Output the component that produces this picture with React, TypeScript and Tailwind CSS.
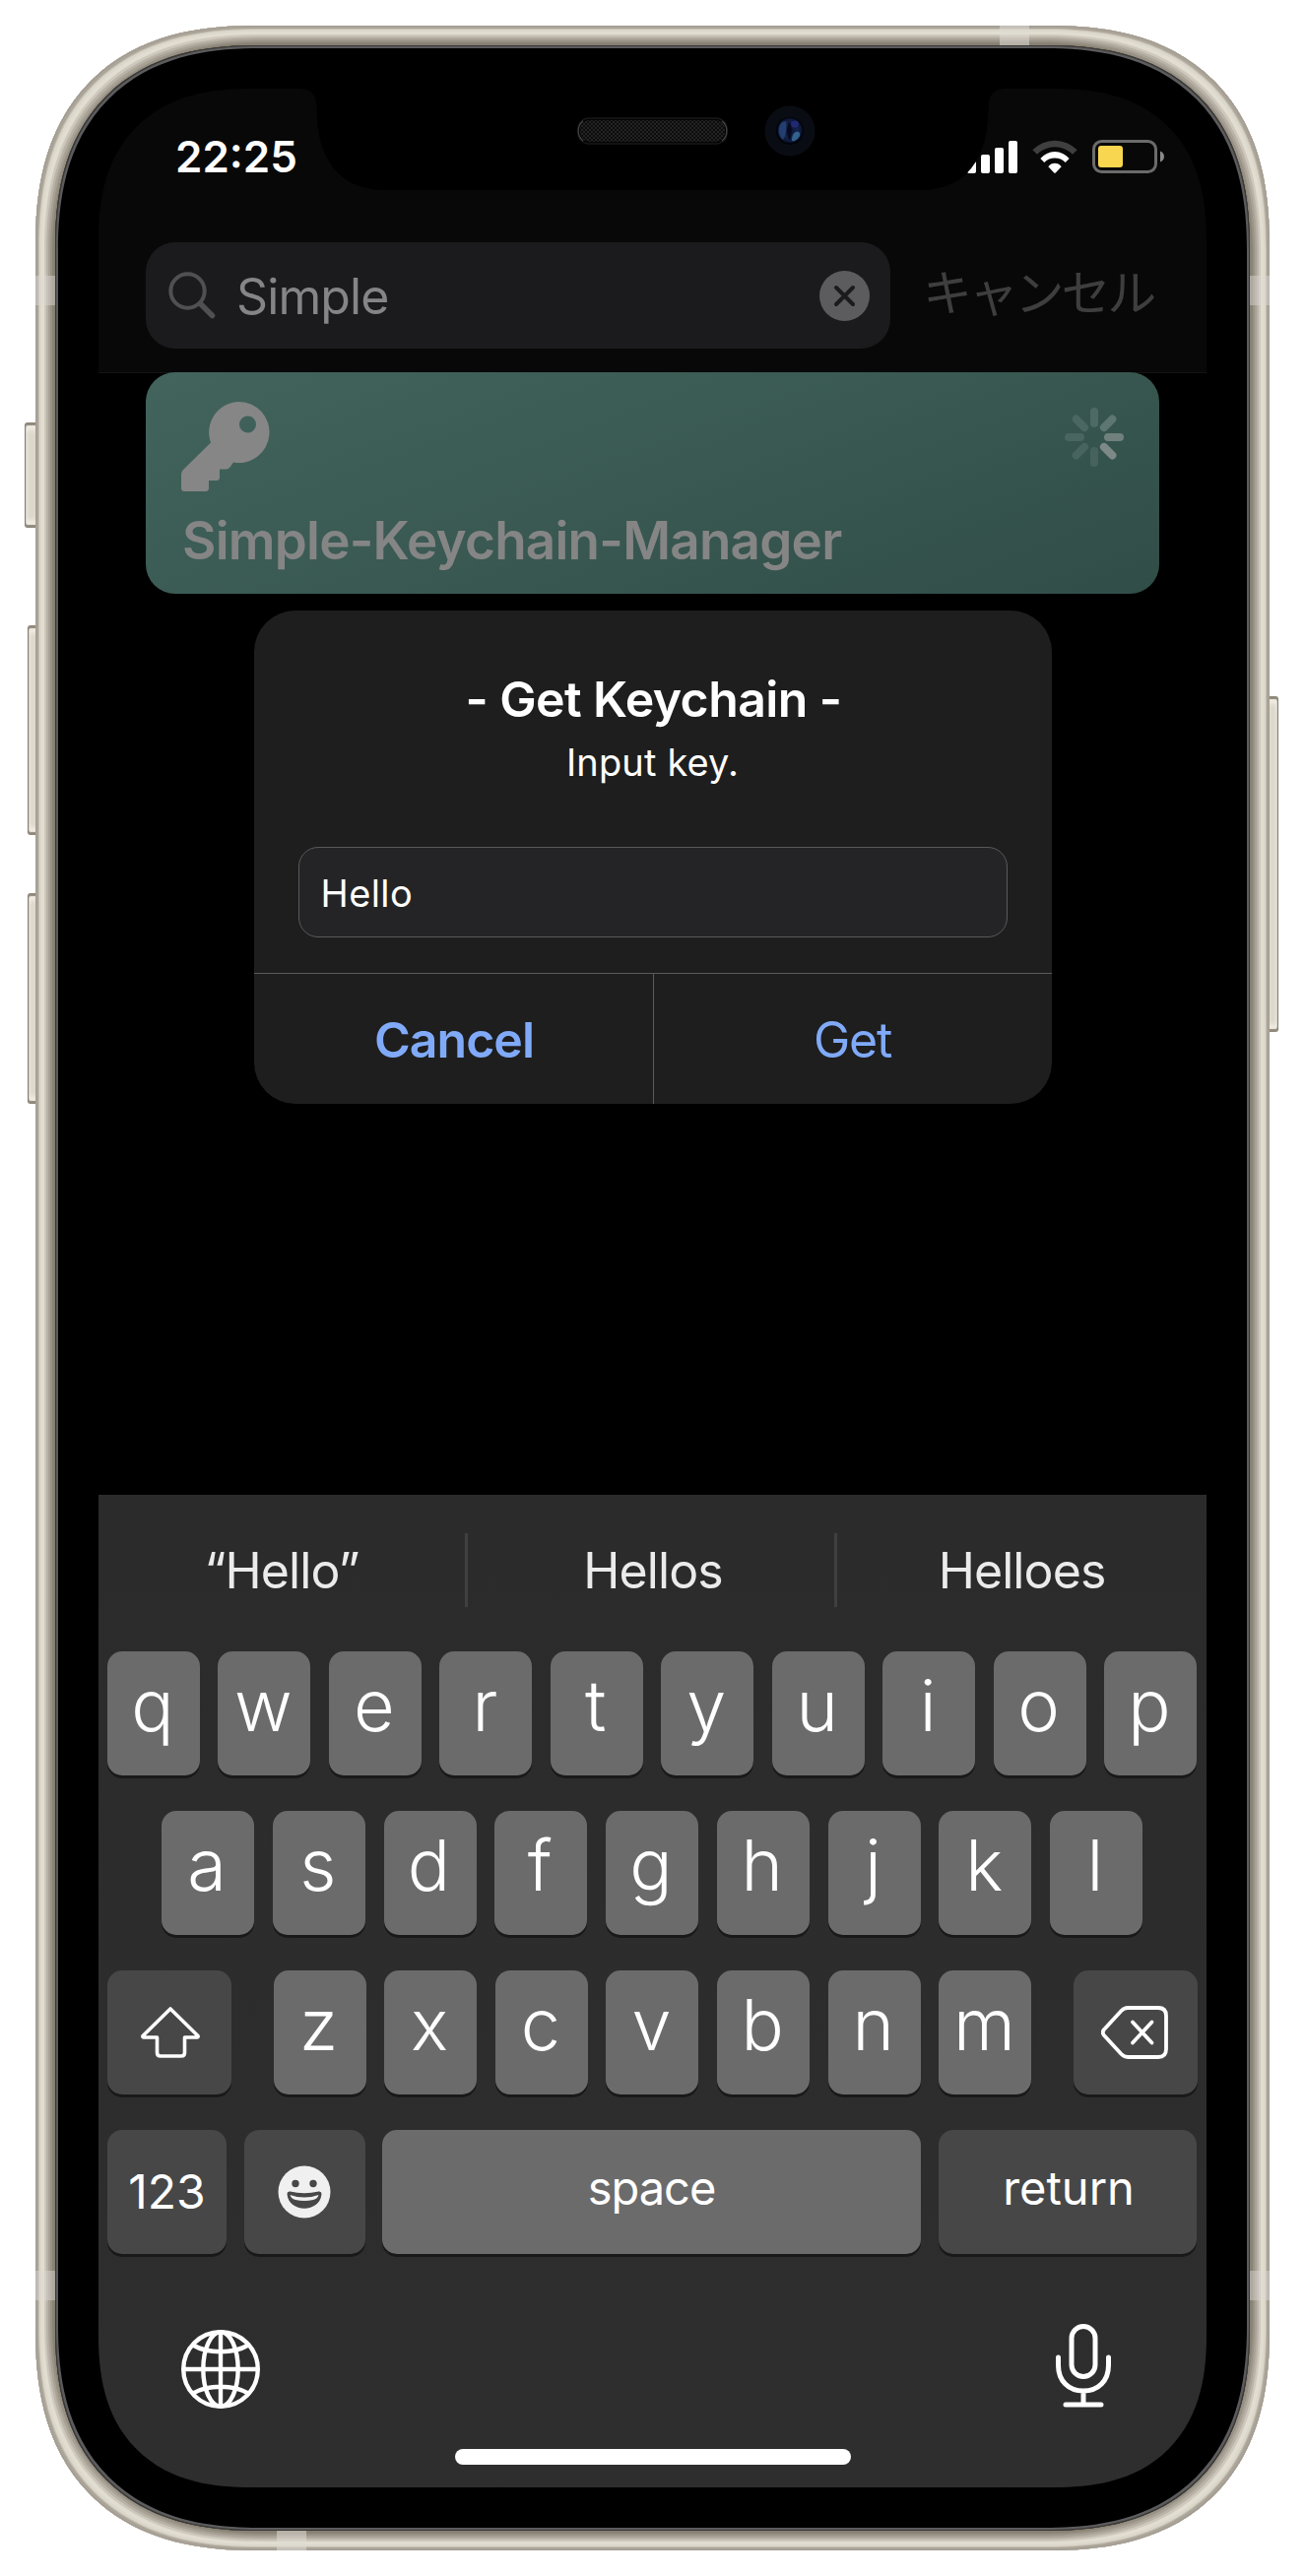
import type { ReactNode } from "react";

const FONT = "font-['Inter','Noto_Sans_CJK_JP',sans-serif]";

function SideButton({ className }: { className: string }) {
  return (
    <div
      className={`absolute bg-[#ddd8cc] shadow-[inset_0_3px_1px_#8f887b,inset_0_-3px_1px_#8f887b,inset_0_8px_4px_#efebe2,inset_0_-8px_4px_#efebe2] ${className}`}
    />
  );
}

function Speaker() {
  return (
    <svg className="absolute left-[486px] top-[29px]" width="153" height="28" viewBox="0 0 153 28">
      <defs>
        <pattern id="mesh" width="4" height="4" patternUnits="userSpaceOnUse">
          <rect width="4" height="4" fill="#0c0c0c" />
          <circle cx="1" cy="1" r="0.9" fill="#2e2e2e" />
          <circle cx="3" cy="3" r="0.9" fill="#2e2e2e" />
        </pattern>
      </defs>
      <rect x="1" y="1" width="151" height="26" rx="11" fill="#050505" stroke="#181818" strokeWidth="1.5" />
      <rect x="3" y="3" width="147" height="22" rx="9.5" fill="url(#mesh)" />
      <path d="M6 4C-0.5 9 -0.5 19 6 24M147 4C153.5 9 153.5 19 147 24" stroke="#444" strokeWidth="1.2" fill="none" />
    </svg>
  );
}

function Camera() {
  return (
    <svg className="absolute left-[676px] top-[17px]" width="52" height="52" viewBox="0 0 52 52">
      <defs>
        <radialGradient id="lens">
          <stop offset="0" stopColor="#0b1030" />
          <stop offset="0.6" stopColor="#14234f" />
          <stop offset="1" stopColor="#0a1430" />
        </radialGradient>
      </defs>
      <circle cx="26" cy="26" r="25.5" fill="#090d13" />
      <circle cx="26" cy="26" r="14" fill="#02040a" />
      <circle cx="26" cy="25.500" r="12.500" fill="url(#lens)" />
      <path d="M18 17C13 22 14 31 19 35C22 31 23 23 22 16Z" fill="#2a4a7c" opacity="0.75" />
      <path d="M32 27C35 26 37 28 36 31C34 35 30 37 28 36C28 32 29 28 32 27Z" fill="#3f78a6" opacity="0.75" />
      <ellipse cx="31" cy="19" rx="4" ry="3.500" fill="#232a78" opacity="0.9" />
      <ellipse cx="25.500" cy="26" rx="2.200" ry="9" fill="#050716" opacity="0.8" />
    </svg>
  );
}

function Notch() {
  return (
    <div className="absolute inset-x-0 top-0 h-[103px]">
      <svg width="1125" height="103" viewBox="0 0 1125 103">
        <path
          d="M204 0C216 0 221.500 6 221.500 20C221.500 72 245 103 290 103H835C880 103 903.500 72 903.500 20C903.500 6 909 0 921 0Z"
          fill="#000"
        />
      </svg>
      <Speaker />
      <Camera />
    </div>
  );
}

function StatusIcons() {
  return (
    <div className="flex items-center">
      <svg width="51" height="33" viewBox="0 0 51 33" fill="#fff">
        <rect x="0" y="20.500" width="9" height="12.500" rx="2" />
        <rect x="14" y="14" width="9" height="19" rx="2" />
        <rect x="28" y="7" width="9" height="26" rx="2" />
        <rect x="42" y="0" width="9" height="33" rx="2" />
      </svg>
      <svg className="ml-[15px]" width="46" height="34.700" viewBox="0 0 138 104" fill="#fff">
        <path d="M1 31A94 94 0 0 1 137 31L123 44A77 77 0 0 0 15 44Z" fill="#3f3f3f" />
        <path d="M25 57A57 57 0 0 1 113 57L101 69A44 44 0 0 0 37 69Z" />
        <path d="M49 82C59 68 79 68 89 82L72 100Q69 103 66 100Z" />
      </svg>
      <svg className="ml-[15px]" width="73" height="34" viewBox="0 0 73 34">
        <rect x="1.500" y="1.500" width="63" height="31" rx="8" fill="none" stroke="#6b6b6b" strokeWidth="3" />
        <rect x="6" y="6" width="25" height="22" rx="3" fill="#f8d64f" />
        <path d="M69 11.500C74.300 13.500 74.300 20.500 69 22.500Z" fill="#8a8a8a" />
      </svg>
    </div>
  );
}

function SearchIcon() {
  return (
    <svg width="48" height="48" viewBox="0 0 48 48" fill="none" stroke="#505052" strokeLinecap="round">
      <circle cx="19.500" cy="19.500" r="17.200" strokeWidth="4" />
      <path d="M32.500 32.500L44.500 44.500" strokeWidth="5.500" />
    </svg>
  );
}

function ClearIcon() {
  return (
    <svg width="51" height="51" viewBox="0 0 51 51">
      <circle cx="25.500" cy="25.500" r="25.500" fill="#5c5c5e" />
      <path d="M17 17L34 34M34 17L17 34" stroke="#1b1b1d" strokeWidth="4" strokeLinecap="round" />
    </svg>
  );
}

function KeyIcon() {
  return (
    <svg width="90" height="91" viewBox="0 0 90 91">
      <path
        fillRule="evenodd"
        d="M59 0A31 31 0 1 1 53 61.500L49.500 66.500Q48 68.500 45.500 68.500H39V76.500Q39 80 35.500 80H28V87.500Q28 91 24.500 91H3.500Q0 91 0 87.500V74Q0 71 2 69L30 41.500A31 31 0 0 1 59 0ZM67.500 14.500A8.500 8.500 0 1 0 67.500 31.500A8.500 8.500 0 1 0 67.500 14.500Z"
        fill="#868686"
      />
    </svg>
  );
}

const SPOKES = ["#4d6a65", "#5e7672", "#6f807d", "#7c8987", "#47625d", "#48645f", "#4a6661", "#4a6762"];

function Spinner() {
  return (
    <svg width="60" height="60" viewBox="-30 -30 60 60">
      {SPOKES.map((color, i) => (
        <rect key={i} x="-4" y="-30" width="8" height="20" rx="4" fill={color} transform={`rotate(${i * 45})`} />
      ))}
    </svg>
  );
}

function ShiftIcon() {
  return (
    <svg width="60" height="52" viewBox="0 0 60 52" fill="none" stroke="#fff" strokeWidth="3.600" strokeLinejoin="round">
      <path d="M30 2L58 29.500Q58.500 31 57 31H44.500V46.500Q44.500 50 41 50H20Q16.500 50 16.500 46.500V31H3Q1.500 31 2 29.500Z" />
    </svg>
  );
}

function DeleteIcon() {
  return (
    <svg className="mr-[2px]" width="68" height="54" viewBox="0 0 68 54" fill="none" stroke="#fff" strokeWidth="3.800" strokeLinejoin="round" strokeLinecap="round">
      <path d="M27 2H58Q66 2 66 10V44Q66 52 58 52H27Q23.500 52 20.500 49L3 30Q0.500 27 3 24L20.500 5Q23.500 2 27 2Z" />
      <path d="M32 16.500L51.500 37.500M51.500 16.500L32 37.500" />
    </svg>
  );
}

function EmojiIcon() {
  return (
    <svg className="mr-[2px]" width="54" height="54" viewBox="0 0 54 54">
      <circle cx="27" cy="27" r="26.500" fill="#f0f0f0" />
      <circle cx="18" cy="18.500" r="3.700" fill="#474747" />
      <circle cx="36" cy="18.500" r="3.700" fill="#474747" />
      <path d="M9.500 29Q9.500 26 12.500 26.500Q27 30 41.500 26.500Q44.500 26 44.500 29C43 48.500 11 48.500 9.500 29Z" fill="#474747" />
      <path d="M12.500 30Q27 35 41.500 30Q40.500 34 36 35Q27 37 18 35Q13.500 34 12.500 30Z" fill="#f0f0f0" />
    </svg>
  );
}

function GlobeIcon() {
  return (
    <svg width="80" height="80" viewBox="0 0 80 80" fill="none" stroke="#fff" strokeWidth="4.400">
      <circle cx="40" cy="40" r="37.800" />
      <ellipse cx="40" cy="40" rx="17.700" ry="37.800" />
      <path d="M40 2V78M2 40H78M12 15.500C27 24.500 53 24.500 68 15.500M12 64.500C27 55.500 53 55.500 68 64.500" />
    </svg>
  );
}

function MicIcon() {
  return (
    <svg width="56" height="85" viewBox="0 0 56 85" fill="none" stroke="#fff" strokeWidth="5" strokeLinecap="round">
      <rect x="16" y="2.500" width="24" height="51" rx="12" />
      <path d="M2.500 34V42C2.500 58 13 68 28 68C43 68 53.500 58 53.500 42V34M28 68V82M10 82H46" />
    </svg>
  );
}

function Key({ children, dark = false, className }: { children: ReactNode; dark?: boolean; className: string }) {
  return (
    <div
      className={`flex h-[126px] shrink-0 justify-center rounded-[15px] text-white shadow-[0_3px_0_#191919] ${
        dark ? "bg-[#474747]" : "bg-[#6b6b6b]"
      } ${className}`}
    >
      {children}
    </div>
  );
}

function Letters({ row, className }: { row: string; className: string }) {
  return (
    <div className={`flex justify-between ${className}`}>
      {row.split("").map((letter) => (
        <Key key={letter} className="w-[94px] pt-[19px] pr-[2px] text-[72px] leading-none font-[350]">
          {letter}
        </Key>
      ))}
    </div>
  );
}

function Keyboard() {
  return (
    <div className="mt-auto flex h-[1008px] flex-col bg-linear-to-b from-[#2b2b2b] to-[#2e2e2e]">
      <div className="flex h-[159px] shrink-0 pt-[39px] text-[50px] leading-none tracking-[-0.9px] text-[#ebebeb]">
        <div className="flex h-[75px] w-[375px] items-center justify-center border-r-3 border-[#404040]">“Hello”</div>
        <div className="flex h-[75px] w-[375px] items-center justify-center border-r-3 border-[#404040] pl-[4px]">Hellos</div>
        <div className="flex h-[75px] w-[375px] items-center justify-center">Helloes</div>
      </div>
      <div className="flex flex-col gap-[36px]">
        <Letters row="qwertyuiop" className="pr-[10px] pl-[9px]" />
        <Letters row="asdfghjkl" className="pr-[65px] pl-[64px]" />
        <div className="flex justify-between px-[9px]">
          <Key dark className="w-[126px] items-center pl-px">
            <ShiftIcon />
          </Key>
          <Letters row="zxcvbnm" className="w-[770px]" />
          <Key dark className="w-[126px] items-center">
            <DeleteIcon />
          </Key>
        </div>
        <div className="flex pl-[9px] leading-none">
          <Key dark className="w-[121px] pt-[39px] text-[48px]">
            123
          </Key>
          <Key dark className="ml-[18px] w-[123px] items-center">
            <EmojiIcon />
          </Key>
          <Key className="ml-[17px] w-[547px] pt-[35px] text-[47px] tracking-[-1px]">space</Key>
          <Key dark className="ml-[18px] w-[262px] pt-[35px] pl-[2px] text-[47px]">
            return
          </Key>
        </div>
      </div>
      <div className="flex justify-between pt-[77px] pr-[97px] pl-[84px]">
        <GlobeIcon />
        <div className="-mt-[6px]">
          <MicIcon />
        </div>
      </div>
      <div className="mt-[41px] ml-[362px] h-[16px] w-[402px] rounded-full bg-white" />
    </div>
  );
}

function Dialog() {
  return (
    <div className="mx-auto mt-[17px] flex h-[501px] w-[810px] flex-col rounded-[42px] bg-[#1e1e1e] text-white">
      <div className="flex h-[368px] flex-col items-center px-[45px] pt-[65px]">
        <h2 className="pl-[2px] text-[50px] leading-none font-semibold tracking-[-0.6px]">- Get Keychain -</h2>
        <p className="mt-[20px] text-[38px] leading-none tracking-[0.15px]">Input key.</p>
        <div className="mt-[67px] flex h-[92px] w-full items-center rounded-[20px] border border-[#5a5a5c] bg-[#242426] pt-[2px] pl-[22px] text-[38px] leading-none tracking-[0.4px]">
          Hello
        </div>
      </div>
      <div className="flex flex-1 border-t border-[#5b5b5b] pt-px text-[50px] leading-none text-[#80aaf8]">
        <div className="-mt-px flex w-[406px] items-center justify-center border-r border-[#5b5b5b] pt-px pl-[2px] font-semibold tracking-[-0.95px]">
          Cancel
        </div>
        <div className="flex flex-1 items-center justify-center tracking-[-1.3px]">Get</div>
      </div>
    </div>
  );
}

function Screen() {
  return (
    <div className="relative flex h-[2436px] w-[1125px] flex-col overflow-hidden rounded-[155px] bg-black [corner-shape:superellipse(1.27)]">
      <div className="flex h-[289px] shrink-0 flex-col border-b border-[#141414] bg-[#080808]">
        <div className="flex h-[156px] justify-between pt-[47px] pr-[43px] pl-[78px]">
          <span className="text-[44px] leading-none font-semibold text-white">22:25</span>
          <div className="pt-[5px]">
            <StatusIcons />
          </div>
        </div>
        <div className="flex h-[108px] items-center pl-[48px]">
          <div className="flex h-[108px] w-[756px] items-center rounded-[30px] bg-[#1b1b1d] pr-[21px] pl-[23px]">
            <SearchIcon />
            <span className="ml-[21px] pt-[2px] text-[50px] leading-none tracking-[-0.9px] text-[#858587]">Simple</span>
            <div className="ml-auto">
              <ClearIcon />
            </div>
          </div>
          <span className="-mt-[4px] ml-[33px] text-[50px] leading-none font-normal tracking-[-3.2px] whitespace-nowrap text-[#3e3e3e]">
            キャンセル
          </span>
        </div>
      </div>
      <div className="mx-auto -mt-px flex h-[225px] w-[1029px] shrink-0 flex-col rounded-[30px] bg-linear-[160deg] from-[#42645d] via-[#395952] to-[#314d48] pt-[30px] pr-[36px] pl-[36px]">
        <div className="flex h-[115px] justify-between">
          <KeyIcon />
          <div className="pt-[6px]">
            <Spinner />
          </div>
        </div>
        <div className="pl-px text-[53px] leading-none font-semibold tracking-[-0.77px] text-[#858585]">Simple-Keychain-Manager</div>
      </div>
      <Dialog />
      <Keyboard />
      <Notch />
    </div>
  );
}

export default function App() {
  return (
    <div className={`relative h-[2616px] w-[1325px] overflow-hidden bg-white pt-[26px] pl-[36px] ${FONT}`}>
      <SideButton className="top-[429px] left-[25px] h-[107px] w-[14px] rounded-l-[3px] border-l border-[#857e72]" />
      <SideButton className="top-[635px] left-[28px] h-[213px] w-[11px] rounded-l-[3px] border-l border-[#857e72]" />
      <SideButton className="top-[907px] left-[28px] h-[214px] w-[11px] rounded-l-[3px] border-l border-[#857e72]" />
      <SideButton className="top-[707px] left-[1287px] h-[341px] w-[11px] rounded-r-[3px] border-r border-[#857e72]" />
      <div className="relative h-[2564px] w-[1253px] overflow-hidden rounded-[225px] bg-[#857f73] [corner-shape:superellipse(1.27)] shadow-[inset_0_0_0_1px_#a39c92,inset_0_0_0_3px_#aba499,inset_0_0_0_4px_#c6c0b4,inset_0_0_0_6px_#dcd7cb,inset_0_0_0_9px_#e2ddd1,inset_0_0_0_11px_#cec8bc,inset_0_0_0_13px_#b9b3a7,inset_0_0_0_15px_#a8a195,inset_0_0_0_17px_#989185,inset_0_0_0_19px_#898375]">
        <div className="absolute top-[254px] left-0 h-[30px] w-[20px] bg-[#dedad4]/45" />
        <div className="absolute top-[254px] right-0 h-[30px] w-[20px] bg-[#dedad4]/45" />
        <div className="absolute top-[2280px] left-0 h-[30px] w-[20px] bg-[#dedad4]/45" />
        <div className="absolute top-[2280px] right-0 h-[30px] w-[20px] bg-[#dedad4]/45" />
        <div className="absolute top-0 left-[979px] h-[20px] w-[30px] bg-[#dedad4]/55" />
        <div className="absolute bottom-0 left-[245px] h-[20px] w-[30px] bg-[#dedad4]/55" />
        <div className="relative m-[20px] h-[2524px] w-[1213px] rounded-[207px] bg-black pt-[44px] pl-[44px] [corner-shape:superellipse(1.27)] shadow-[inset_0_0_0_1px_#3a3733,inset_0_0_0_3px_#5c5c5e]">
          <Screen />
        </div>
      </div>
    </div>
  );
}
